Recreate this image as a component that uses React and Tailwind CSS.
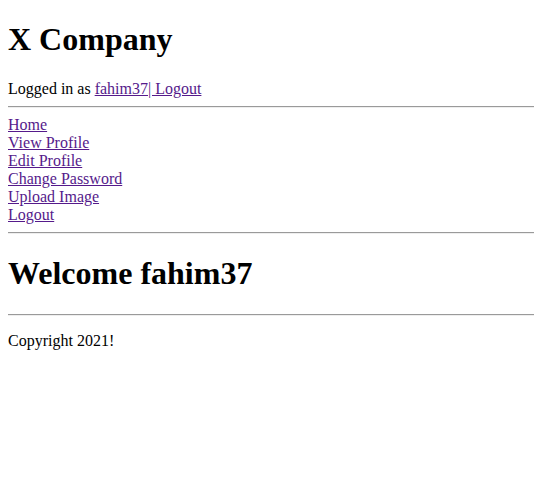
const links = ["Home", "View Profile", "Edit Profile", "Change Password", "Upload Image", "Logout"];

const Rule = () => (
  <hr className="my-2 h-0 border-0 border-t border-b border-t-[#9a9a9a] border-b-[#eeeeee]" />
);

const App = () => {
  return (
    <div className="min-h-[500px] bg-white pl-2 font-['Liberation_Serif',serif] text-[16px] leading-[normal] text-black">
      <h1 className="my-[21.44px] text-[32px] font-bold leading-[normal]">X Company</h1>
      <div>
        Logged in as{" "}
        <a href="#" className="text-[#551a8b] underline">fahim37</a>
        <a href="#" className="text-[#551a8b] underline">| Logout</a>
      </div>
      <Rule />
      <div>
        {links.map((link) => (
          <div key={link}>
            <a href="#" className="text-[#551a8b] underline">{link}</a>
          </div>
        ))}
      </div>
      <Rule />
      <h1 className="my-[21.44px] text-[32px] font-bold leading-[normal]">Welcome fahim37</h1>
      <Rule />
      <p className="my-4">Copyright 2021!</p>
    </div>
  );
};

export default App;
